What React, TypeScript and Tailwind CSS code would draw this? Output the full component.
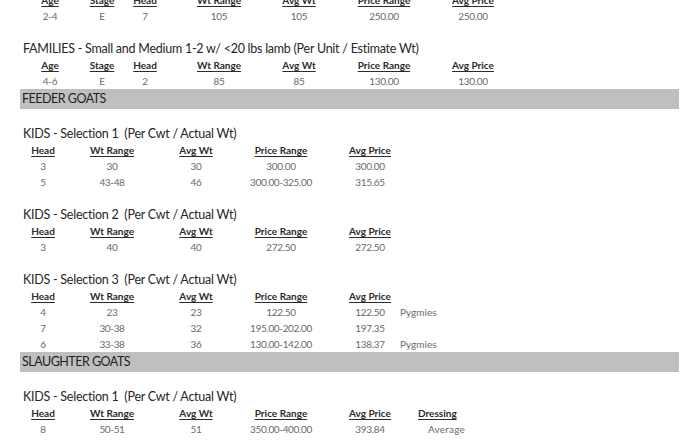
import React from 'react';

type Row = string[];

interface SheetTable {
  title?: string;
  headers: string[];
  rows: Row[];
}

// column boxes, centred text inside each one
const lambCols = ['w-[52px]', 'w-[52px]', 'w-[34px]', 'w-[114px]', 'w-[46px]', 'w-[124px]', 'w-[54px]'];
const kidCols = ['w-[40px]', 'w-[98px]', 'w-[70px]', 'w-[100px]', 'ml-[10px] w-[58px]'];

const headCls = 'flex h-[16px] items-center text-[10px] font-bold text-[#2b2b2b]';
const dataCls = 'flex h-[16px] items-center text-[10px] tracking-[-0.35px] text-[#6a6a6a]';

const TitleLine: React.FC<{ text: string }> = ({ text }) => (
  <div className="mt-[17px] h-[16px] pl-[3px] text-[12.5px] leading-[16px] tracking-[-0.25px] text-[#262626] whitespace-pre">
    {text}
  </div>
);

const Bar: React.FC<{ label: string }> = ({ label }) => (
  <div className="h-[20px] bg-[#bfbfbf] pl-[2px] text-[12.5px] leading-[20px] tracking-[-0.5px] text-[#1f1f1f]">{label}</div>
);

const LambTable: React.FC<SheetTable> = ({ title, headers, rows }) => (
  <div>
    {title && <TitleLine text={title} />}
    <div className={`ml-[4px] ${headCls}`}>
      {headers.map((h, i) => (
        <div key={h} className={`${lambCols[i]} shrink-0 text-center`}>
          <span className="underline underline-offset-[2px]">{h}</span>
        </div>
      ))}
    </div>
    {rows.map((r, ri) => (
      <div key={ri} className={`ml-[4px] ${dataCls}`}>
        {r.map((v, i) => (
          <div key={i} className={`${lambCols[i]} shrink-0 text-center`}>{v}</div>
        ))}
      </div>
    ))}
  </div>
);

const KidTable: React.FC<SheetTable & { dressing?: boolean }> = ({ title, headers, rows, dressing }) => (
  <div>
    {title && <TitleLine text={title} />}
    <div className={`ml-[3px] ${headCls}`}>
      {headers.slice(0, 5).map((h, i) => (
        <div key={h} className={`${kidCols[i]} shrink-0 text-center`}>
          <span className="underline underline-offset-[2px]">{h}</span>
        </div>
      ))}
      {dressing && (
        <div className="pl-[19px]">
          <span className="underline underline-offset-[2px]">Dressing</span>
        </div>
      )}
    </div>
    {rows.map((r, ri) => (
      <div key={ri} className={`ml-[3px] ${dataCls}`}>
        {r.slice(0, 5).map((v, i) => (
          <div key={i} className={`${kidCols[i]} shrink-0 text-center`}>{v}</div>
        ))}
        {r[5] && <div className={dressing ? 'pl-[29px] tracking-[0.2px]' : 'pl-[1px] tracking-[0px]'}>{r[5]}</div>}
      </div>
    ))}
  </div>
);

const kidHeaders = ['Head', 'Wt Range', 'Avg Wt', 'Price Range', 'Avg Price'];
const lambHeaders = ['Age', 'Stage', 'Head', 'Wt Range', 'Avg Wt', 'Price Range', 'Avg Price'];

export default function App() {
  return (
    <div className="h-[441px] w-[700px] overflow-hidden bg-white font-[Lato,'Liberation_Sans',sans-serif]">
      <div className="-mt-[8px] ml-[20px] w-[659px]">
        <LambTable headers={lambHeaders} rows={[['2-4', 'E', '7', '105', '105', '250.00', '250.00']]} />
        <LambTable
          title="FAMILIES - Small and Medium 1-2 w/ <20 lbs lamb (Per Unit / Estimate Wt)"
          headers={lambHeaders}
          rows={[['4-6', 'E', '2', '85', '85', '130.00', '130.00']]}
        />
        <Bar label="FEEDER GOATS" />
        <KidTable
          title="KIDS - Selection 1  (Per Cwt / Actual Wt)"
          headers={kidHeaders}
          rows={[
            ['3', '30', '30', '300.00', '300.00'],
            ['5', '43-48', '46', '300.00-325.00', '315.65'],
          ]}
        />
        <KidTable
          title="KIDS - Selection 2  (Per Cwt / Actual Wt)"
          headers={kidHeaders}
          rows={[['3', '40', '40', '272.50', '272.50']]}
        />
        <KidTable
          title="KIDS - Selection 3  (Per Cwt / Actual Wt)"
          headers={kidHeaders}
          rows={[
            ['4', '23', '23', '122.50', '122.50', 'Pygmies'],
            ['7', '30-38', '32', '195.00-202.00', '197.35'],
            ['6', '33-38', '36', '130.00-142.00', '138.37', 'Pygmies'],
          ]}
        />
        <Bar label="SLAUGHTER GOATS" />
        <KidTable
          title="KIDS - Selection 1  (Per Cwt / Actual Wt)"
          headers={kidHeaders}
          dressing
          rows={[
            ['8', '50-51', '51', '350.00-400.00', '393.84', 'Average'],
            ['4', '45', '45', '370.00', '370.00', 'Average'],
          ]}
        />
      </div>
    </div>
  );
}
